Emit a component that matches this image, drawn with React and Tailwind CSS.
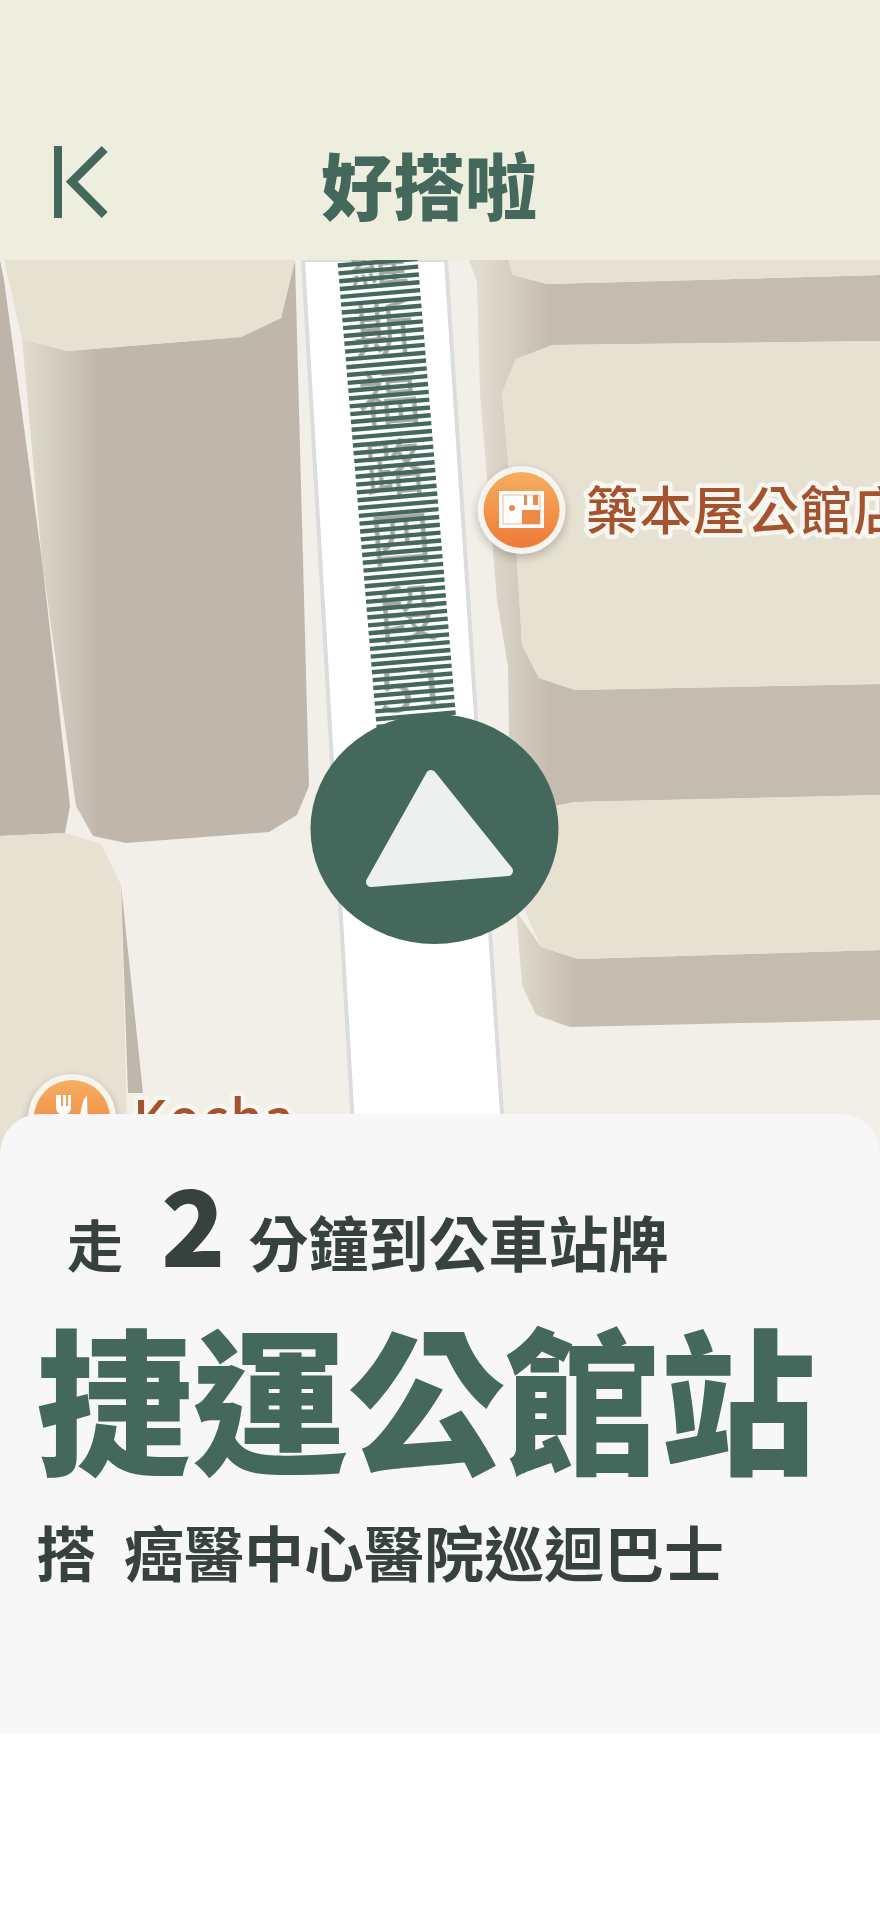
// Bus walking guide screen: header, map preview, stop info sheet
const stripes = Array.from({ length: 60 }, (_, i) => i);

const roadChars = [
  { c: "羅", y: 22 },
  { c: "斯", y: 92 },
  { c: "福", y: 162 },
  { c: "路", y: 232 },
  { c: "四", y: 303 },
  { c: "段", y: 379 },
  { c: "51", y: 452 },
];

function BackIcon() {
  return (
    <svg width="60" height="80" viewBox="0 0 60 80" className="shrink-0">
      <rect x="0" y="4" width="8" height="72" fill="#44695c" />
      <polyline points="50.7,7 17.8,39.7 50.7,73" fill="none" stroke="#44695c" strokeWidth="8.5" />
    </svg>
  );
}

function Poi({ cx, cy, label, labelX, labelY, children }) {
  return (
    <g>
      <circle cx={cx} cy={cy + 4} r="45" fill="#000" opacity="0.18" filter="url(#soft)" />
      <g filter="url(#tiny)">
        <circle cx={cx} cy={cy} r="44" fill="#f6f4ee" />
        <circle cx={cx} cy={cy} r="38" fill="url(#poi)" />
        {children}
      </g>
      <text
        x={labelX}
        y={labelY}
        fill="#a5532e"
        stroke="#f8f6f0"
        strokeWidth="9"
        strokeLinejoin="round"
        fontSize="52"
        letterSpacing="1.5"
        paintOrder="stroke"
        filter="url(#tiny)"
        className="font-['Noto_Sans_CJK_TC'] font-medium"
      >
        {label}
      </text>
    </g>
  );
}

function MapView() {
  return (
    <svg viewBox="0 260 880 900" className="block h-[900px] w-[880px]">
      <defs>
        <linearGradient id="sideA" x1="22" x2="100" y1="0" y2="0" gradientUnits="userSpaceOnUse">
          <stop offset="0" stopColor="#e2dccf" />
          <stop offset="1" stopColor="#bfb7ab" />
        </linearGradient>
        <linearGradient id="sideB" x1="480" x2="550" y1="0" y2="0" gradientUnits="userSpaceOnUse">
          <stop offset="0" stopColor="#e2dcd0" />
          <stop offset="1" stopColor="#c4bcaf" />
        </linearGradient>
        <linearGradient id="sideC" x1="516" x2="578" y1="0" y2="0" gradientUnits="userSpaceOnUse">
          <stop offset="0" stopColor="#e0dacd" />
          <stop offset="1" stopColor="#c4bcaf" />
        </linearGradient>
        <linearGradient id="poi" x1="0" x2="0" y1="0" y2="1">
          <stop offset="0" stopColor="#f5ae5f" />
          <stop offset="1" stopColor="#ee7a38" />
        </linearGradient>
        <filter id="soft" x="-30%" y="-30%" width="160%" height="160%">
          <feGaussianBlur stdDeviation="4" />
        </filter>
        <filter id="tiny" x="-5%" y="-10%" width="110%" height="120%">
          <feGaussianBlur stdDeviation="0.7" />
        </filter>
      </defs>

      <rect x="0" y="260" width="880" height="900" fill="#f2efe8" />

      {/* left buildings */}
      <polygon points="0,260 4,280 42,560 70,806 65,833 0,836" fill="#bdb5a9" />
      <polygon points="22,339 67,351 241,337 281,318 295,260 303,560 309,786 297,815 269,832 126,843 93,836 76,806 42,560" fill="url(#sideA)" />
      <polygon points="4,260 295,260 281,318 241,337 67,351 22,339" fill="#e7e1d1" />
      <polygon points="121,885 143,1093 128,1093" fill="#bdb7ac" />
      <polygon points="0,836 65,833 101,844 121,885 128,1160 0,1160" fill="#e7e1d1" />

      {/* right buildings */}
      <polygon points="469,260 508,260 513,275 547,284 880,275 880,341 553,345 516,359 502,393 480,393 477,282" fill="url(#sideB)" />
      <polygon points="508,260 880,260 880,275 547,284 513,275" fill="#e7e1d1" />
      <polygon points="480,393 502,393 517,560 522,645 539,678 575,690 880,684 880,795 575,802 555,806 510,800 508,667 497,600" fill="url(#sideB)" />
      <polygon points="502,393 516,359 553,345 880,341 880,684 575,690 539,678 522,645 517,560" fill="#e7e1d1" />
      <polygon points="516,911 541,947 578,959 880,950 880,1020 570,1027 536,1015 522,985" fill="url(#sideC)" />
      <polygon points="508,830 555,806 578,802 880,795 880,950 578,959 541,947 525,911" fill="#e7e1d1" />

      {/* road */}
      <polygon points="303,260 446,260 505,1160 355,1160" fill="#ffffff" stroke="#dbdcdd" strokeWidth="4" />

      {/* route stripes with the road name under them */}
      <g transform="translate(377.5 260) rotate(-4.8)">
        <g fill="#aaa6a3" fontSize="62" textAnchor="middle" filter="url(#tiny)" className="font-['Noto_Sans_CJK_TC'] font-normal">
          {roadChars.map((r) => (
            <text key={r.c} x="0" y={r.y}>
              {r.c}
            </text>
          ))}
        </g>
        {stripes.map((i) => (
          <rect key={i} x="-40" y={i * 7.85} width="80" height="4.4" fill="#44695c" />
        ))}
      </g>

      {/* position marker */}
      <ellipse cx="434.5" cy="829" rx="124" ry="115" fill="#44695c" />
      <polygon points="431,775 508,871 371,882" fill="#ecf0ee" stroke="#ecf0ee" strokeWidth="10" strokeLinejoin="round" />

      <Poi cx={521.6} cy={510} label="築本屋公館店" labelX={586} labelY={530}>
        <rect x="499" y="491" width="45" height="37" fill="#fff" />
        <rect x="503" y="495" width="37" height="29" fill="#fff" stroke="#f4b98c" strokeWidth="1" />
        <rect x="522" y="510" width="18" height="14" fill="#ef8a45" />
        <rect x="524" y="495" width="3" height="10" fill="#ef8a45" />
        <rect x="533" y="495" width="5" height="10" fill="#ef8a45" />
        <circle cx="512" cy="508" r="3" fill="#ef8a45" />
      </Poi>

      <Poi cx={72} cy={1118} label="Kocha" labelX={133} labelY={1138}>
        <path d="M56 1095v12q0 6 5 7v22h5v-22q5-1 5-7v-12h-3v11h-2v-11h-3v11h-2v-11z" fill="#fff" />
        <path d="M87 1095q-6 6-7 24h4v17h4z" fill="#fff" />
      </Poi>
    </svg>
  );
}

export default function App() {
  return (
    <div className="h-[1912px] w-[880px] overflow-hidden bg-white font-['Noto_Sans_CJK_TC','Noto_Sans',sans-serif]">
      <header className="relative z-10 flex h-[260px] items-start bg-[#eeeede] pl-[54px] pt-[142px]">
        <BackIcon />
        <h1 className="ml-[207px] mt-[-9px] text-[72px] font-black leading-[100px] text-[#44695c]">好搭啦</h1>
      </header>

      <MapView />

      <section className="relative mt-[-46px] flex h-[619px] flex-col rounded-t-[40px] bg-[#f7f7f7]">
        <div className="flex h-[172px] items-baseline pl-[67px] pt-[54px] text-[#37423e]">
          <span className="text-[56px] font-bold leading-none">走</span>
          <span className="ml-[38px] text-[106px] font-black leading-none">2</span>
          <span className="ml-[23px] text-[60px] font-bold leading-none">分鐘到公車站牌</span>
        </div>
        <h2 className="ml-[36px] mt-[18px] whitespace-nowrap text-[156px] font-black leading-[180px] text-[#44695c]">捷運公館站</h2>
        <div className="ml-[36px] mt-[37px] flex items-baseline text-[60px] font-bold leading-none text-[#37423e]">
          <span>搭</span>
          <span className="ml-[28px]">癌醫中心醫院巡迴巴士</span>
        </div>
      </section>
    </div>
  );
}
